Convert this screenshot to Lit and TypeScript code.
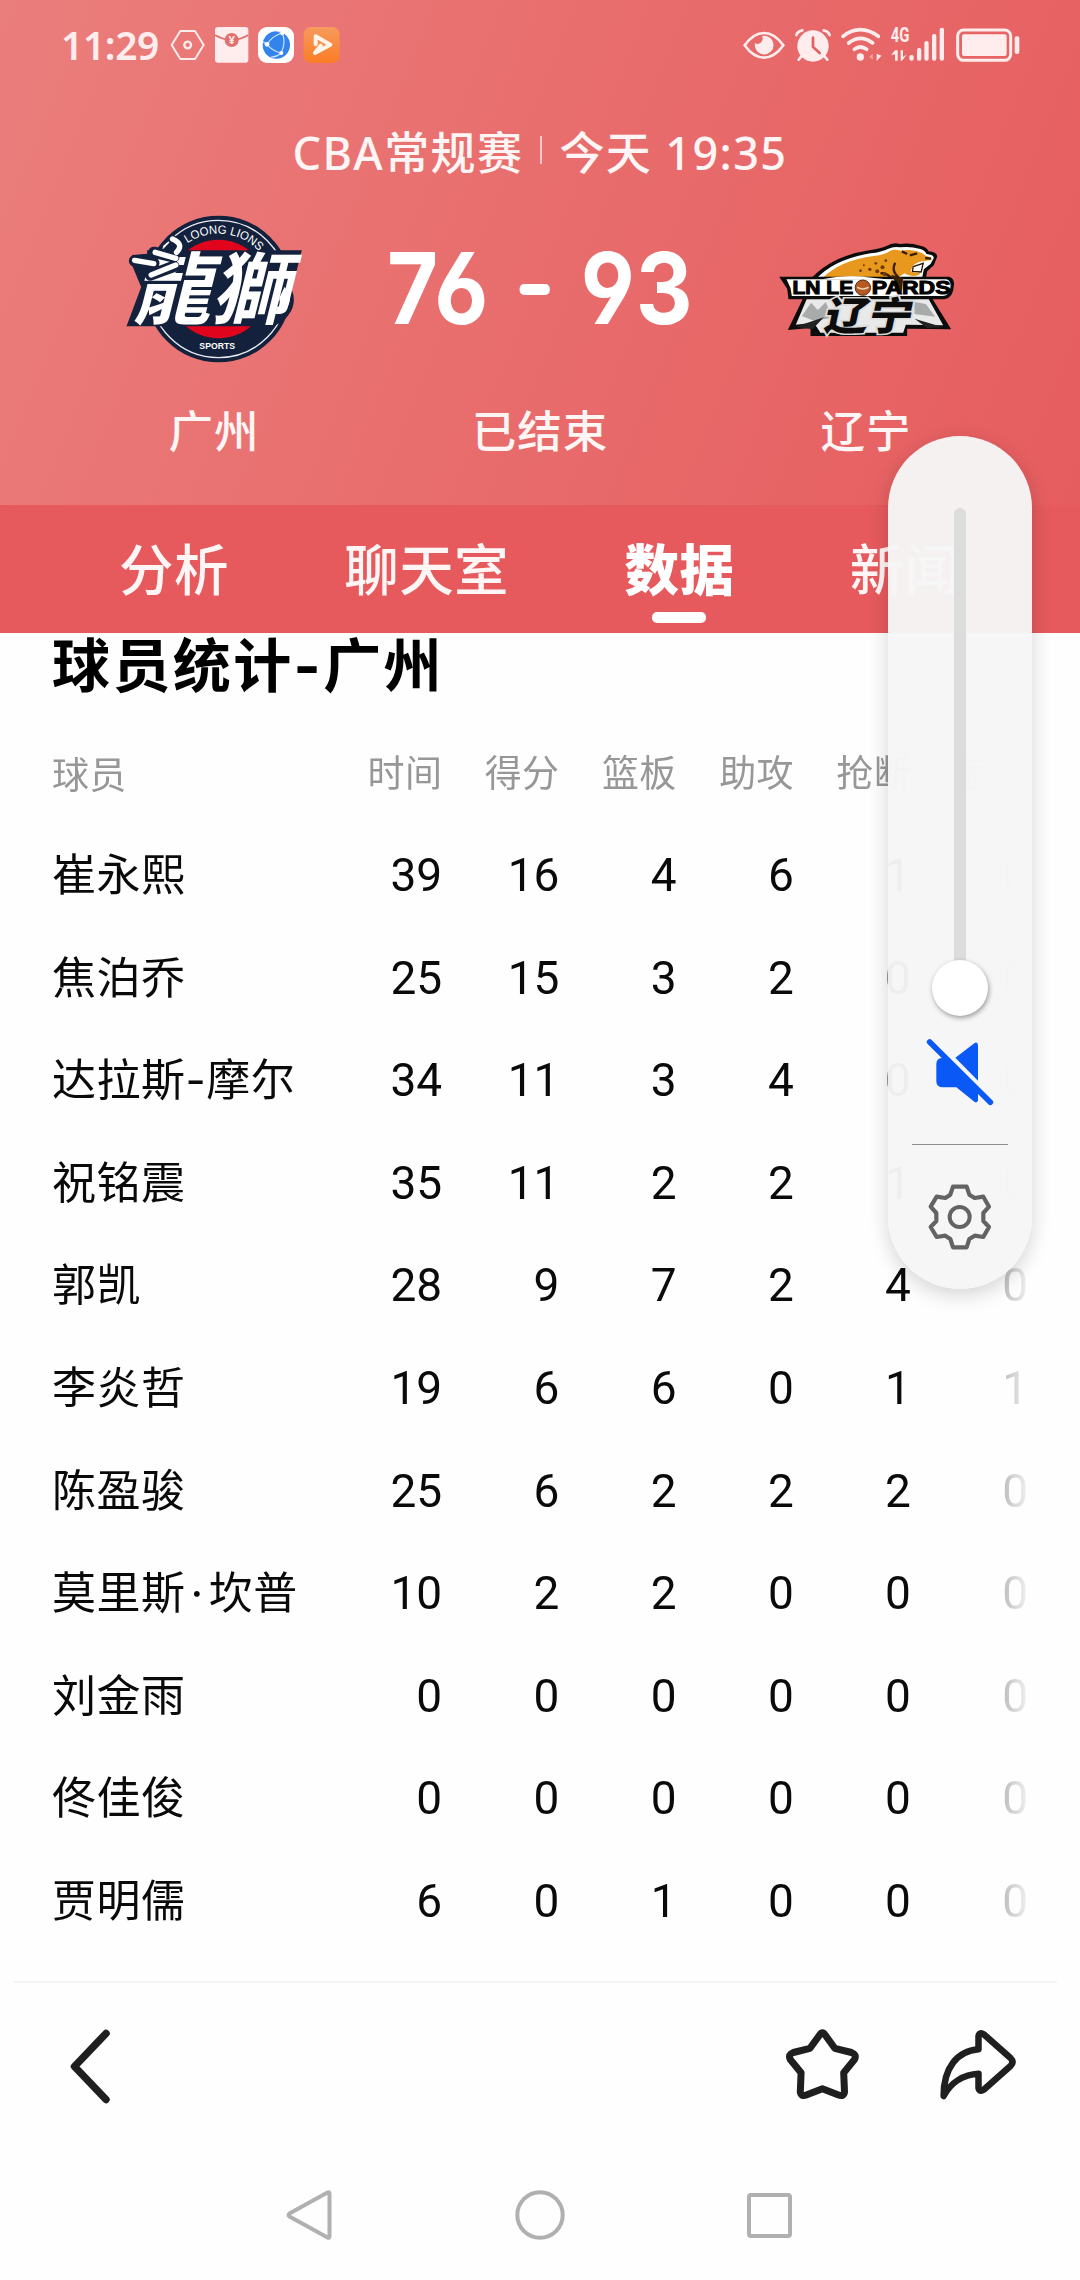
import { LitElement, html, css, svg } from "lit";
import { customElement, property, state } from "lit/decorators.js";
import { classMap } from "lit/directives/class-map.js";

interface PlayerRow {
  name: string;
  stats: number[];
}

const TABS = ["分析", "聊天室", "数据", "新闻"];

const COLUMNS = ["时间", "得分", "篮板", "助攻", "抢断", "盖帽"];

const PLAYERS: PlayerRow[] = [
  { name: "崔永熙", stats: [39, 16, 4, 6, 1, 0] },
  { name: "焦泊乔", stats: [25, 15, 3, 2, 0, 0] },
  { name: "达拉斯-摩尔", stats: [34, 11, 3, 4, 0, 0] },
  { name: "祝铭震", stats: [35, 11, 2, 2, 1, 0] },
  { name: "郭凯", stats: [28, 9, 7, 2, 4, 0] },
  { name: "李炎哲", stats: [19, 6, 6, 0, 1, 1] },
  { name: "陈盈骏", stats: [25, 6, 2, 2, 2, 0] },
  { name: "莫里斯·坎普", stats: [10, 2, 2, 0, 0, 0] },
  { name: "刘金雨", stats: [0, 0, 0, 0, 0, 0] },
  { name: "佟佳俊", stats: [0, 0, 0, 0, 0, 0] },
  { name: "贾明儒", stats: [6, 0, 1, 0, 0, 0] },
];

@customElement("status-bar")
export class StatusBar extends LitElement {
  static styles = css`
    :host {
      display: flex;
      align-items: center;
      justify-content: space-between;
      height: 90px;
      padding: 0 60px 0 61px;
      color: #ffecec;
    }

    .group {
      display: flex;
      align-items: center;
    }

    .time {
      width: 101px;
      font-size: 39px;
      font-weight: 600;
      line-height: 50px;
      letter-spacing: -0.4px;
      white-space: nowrap;
    }

    .left {
      gap: 9px;
    }

    .right {
      gap: 10px;
    }

    svg {
      display: block;
      height: 36px;
      overflow: visible;
    }

    .network {
      font-family: "Roboto", sans-serif;
      font-size: 58px;
      font-weight: 700;
    }

    .yen {
      font-size: 34px;
      font-weight: 700;
    }
  `;

  render() {
    return html`
      <div class="group left">
        <span class="time">11:29</span>
        <svg width="34" viewBox="392 52 102 108" fill="none" stroke="currentColor">
          <path
            d="M420 64h44l26 42-26 42h-44l-26-42z"
            stroke-width="6"
            stroke-linejoin="round"
          />
          <circle cx="442" cy="106" r="10" stroke-width="7" />
        </svg>
        <svg width="34" viewBox="525 52 102 108">
          <rect x="528" y="52" width="100" height="107" rx="9" fill="currentColor" />
          <path
            d="M528 76Q578 106 628 76"
            fill="none"
            stroke="#dd6b69"
            stroke-width="5"
          />
          <circle cx="578" cy="91" r="21" fill="#e0706e" />
          <text class="yen" x="578" y="104" text-anchor="middle" fill="currentColor">¥</text>
        </svg>
        <svg width="36" viewBox="654 52 108 108">
          <rect x="657" y="52" width="108" height="108" rx="27" fill="#fff" />
          <circle cx="712" cy="106" r="41" fill="#3284ec" />
          <g fill="none" stroke="#cfe4ff" stroke-width="3.5">
            <path d="M730 70Q700 78 684 104Q700 124 726 130" />
            <path d="M730 70Q742 100 726 130Q714 142 696 142" />
            <path d="M684 104L672 96M730 70L714 64" />
          </g>
          <g fill="#fff">
            <circle cx="730" cy="71" r="6" />
            <circle cx="684" cy="104" r="7" />
            <circle cx="727" cy="130" r="6" />
          </g>
        </svg>
        <svg width="36" viewBox="788 52 108 108">
          <defs>
            <linearGradient id="orange" x1="0" y1="0" x2="0" y2="1">
              <stop offset="0" stop-color="#f79a5c" />
              <stop offset="1" stop-color="#fb7d25" />
            </linearGradient>
          </defs>
          <rect x="793" y="52" width="108" height="108" rx="22" fill="url(#orange)" />
          <path
            d="M829 104V80L873 105L827 130L844 108"
            fill="none"
            stroke="#fff4ea"
            stroke-width="12"
            stroke-linejoin="round"
            stroke-linecap="round"
          />
        </svg>
      </div>
      <div class="group right">
        <svg width="42" viewBox="67 52 126 108" fill="none" stroke="currentColor">
          <path d="M72 107Q98 70 130 70T188 107Q162 144 130 144T72 107z" stroke-width="8" />
          <path
            d="M124 79A28 28 0 1 1 103 101A16 16 0 0 0 124 79z"
            fill="currentColor"
            stroke="none"
          />
        </svg>
        <svg width="36" viewBox="227 52 108 108">
          <g fill="none" stroke="currentColor" stroke-linecap="round">
            <path d="M231 76Q236 64 249 62M331 76Q326 64 313 62" stroke-width="8" />
            <path d="M248 138L238 150M314 138L324 150" stroke-width="8" />
          </g>
          <circle cx="281" cy="109" r="47" fill="currentColor" />
          <path
            d="M281 84V112L301 130"
            fill="none"
            stroke="#e4605f"
            stroke-width="8"
            stroke-linecap="round"
          />
        </svg>
        <svg width="41" viewBox="363 52 123 108" fill="none" stroke="currentColor">
          <g stroke-width="11" stroke-linecap="round">
            <path d="M369 80Q420 40 475 80" />
            <path d="M386 100Q421 72 458 100" />
            <path d="M403 119Q421 105 440 119" />
          </g>
          <circle cx="421" cy="142" r="11" fill="currentColor" stroke="none" />
          <path d="M458 132L448 141L458 150z" fill="#f3a5a3" stroke="none" />
          <path d="M470 132V154L484 138z" fill="currentColor" stroke="none" />
        </svg>
        <svg width="54" viewBox="513 52 162 108" fill="currentColor">
          <text class="network" x="509" y="98" textLength="56" lengthAdjust="spacingAndGlyphs">4G</text>
          <path d="M511 136L522 122H530V153H522V134zM539 122H546V142L558 134L543 153H539z" />
          <rect x="565" y="136" width="13" height="17" rx="6" />
          <rect x="588" y="115" width="13" height="38" rx="6" />
          <rect x="610" y="94" width="13" height="59" rx="6" />
          <rect x="633" y="73" width="13" height="80" rx="6" />
          <rect x="656" y="54" width="13" height="99" rx="6" />
        </svg>
        <svg width="64" viewBox="707 52 192 108">
          <rect
            x="712"
            y="61"
            width="159"
            height="91"
            rx="18"
            fill="none"
            stroke="currentColor"
            stroke-width="9"
          />
          <rect x="725" y="74" width="134" height="65" rx="6" fill="currentColor" />
          <rect x="883" y="80" width="14" height="53" rx="6" fill="currentColor" />
        </svg>
      </div>
    `;
  }
}

@customElement("team-logo")
export class TeamLogo extends LitElement {
  static styles = css`
    :host {
      display: block;
    }

    svg {
      display: block;
      overflow: visible;
    }

    .ring {
      font-family: "Liberation Sans", sans-serif;
      font-size: 36px;
      fill: #fff;
    }

    .small {
      font-size: 26px;
    }

    .lion {
      font-family: "Noto Sans CJK TC", sans-serif;
      font-weight: 700;
      font-size: 236px;
    }

    .latin {
      font-family: "Liberation Sans", sans-serif;
      font-weight: 700;
      font-size: 54px;
      stroke: #000;
      stroke-width: 3;
    }

    .liao {
      font-family: "Noto Sans CJK SC", sans-serif;
      font-weight: 900;
      font-size: 116px;
      paint-order: stroke;
    }
  `;

  @property() team = "";

  private lions() {
    return svg`
      <svg width="179" height="152" viewBox="44 40 536 456">
        <circle cx="324" cy="268" r="220" fill="#14213d" />
        <circle cx="324" cy="268" r="206" fill="none" stroke="#e8ecf4" stroke-width="4" />
        <circle cx="324" cy="268" r="148" fill="#e0041c" />
        <path
          d="M110 152H574L544 270Q560 310 534 346Q516 372 484 380H48L92 262L66 200Q50 180 66 166L110 162z"
          fill="#14213d"
        />
        <g transform="translate(66 354) skewX(-14)">
          <text
            class="lion"
            textLength="470"
            lengthAdjust="spacingAndGlyphs"
            fill="#fff"
          >龍獅</text>
        </g>
        <g fill="none" stroke-linecap="round" stroke-linejoin="round">
          <path d="M72 184L130 190M130 158L190 172M184 122Q212 138 190 160M120 226L190 200" stroke="#14213d" stroke-width="34" />
          <path d="M72 182L130 192M134 158L196 176M186 118Q222 134 198 158M122 226L196 196" stroke="#fff" stroke-width="16" />
          <path d="M160 140L174 128" stroke="#fff" stroke-width="5" />
        </g>
        <path d="M522 262Q550 296 528 326Q508 350 488 340Q514 320 506 296z" fill="#fff" />
        <path id="top" d="M158 268A166 166 0 0 1 490 268" fill="none" />
        <text class="ring">
          <textPath
            href="#top"
            startOffset="53.5%"
            text-anchor="middle"
            textLength="236"
            lengthAdjust="spacingAndGlyphs"
          >LOONG LIONS</textPath>
        </text>
        <text class="ring small" x="320" y="448" text-anchor="middle" font-weight="700">SPORTS</text>
      </svg>
    `;
  }

  private leopards() {
    return svg`
      <svg width="179" height="100" viewBox="50 55 536 300">
        <path
          d="M130 228L82 328L150 322V346H440V324L572 326L512 228z"
          fill="#0c0c0c"
        />
        <path d="M140 232L106 312L160 306L180 336H428L436 312L548 314L504 234z" fill="#e9e9e9" />
        <path d="M124 286L152 246L172 268L196 244L214 292L160 300z" fill="#a9abab" />
        <path d="M462 244L496 250L524 288L462 280z" fill="#a9abab" />
        <path d="M106 318L190 290L156 326zM548 320L462 294L500 322z" fill="#222" />
        <path
          d="M148 178Q210 106 330 88Q360 84 378 76Q398 64 418 70Q450 66 482 76Q500 80 504 92Q530 94 530 108L520 134L500 152L496 174L430 200H160z"
          fill="#0c0c0c"
        />
        <path
          d="M166 176Q220 116 330 98Q364 94 384 84Q400 76 418 80Q450 76 476 84Q494 88 498 100Q520 102 520 112L510 130L490 146L484 176L430 196H176z"
          fill="#fff"
        />
        <path
          d="M184 174Q240 118 340 106Q374 102 390 90Q404 84 420 90Q450 84 476 94Q490 98 496 106Q514 108 512 118L490 122Q478 120 458 134L450 152Q468 160 480 154L476 162Q452 172 432 158L416 168L420 200L404 180Q300 158 184 174z"
          fill="#e8981c"
        />
        <path
          d="M404 126Q392 150 412 168L424 206L398 178Q380 156 360 158M424 92L440 100M448 104L470 98M494 112L512 114"
          fill="none"
          stroke="#3a2003"
          stroke-width="7"
        />
        <g fill="#6d3c04">
          <circle cx="346" cy="128" r="4" />
          <circle cx="366" cy="140" r="6" />
          <circle cx="328" cy="146" r="5" />
          <circle cx="350" cy="152" r="6" />
          <circle cx="300" cy="150" r="4" />
          <circle cx="376" cy="120" r="4" />
          <circle cx="310" cy="134" r="3" />
          <circle cx="372" cy="160" r="6" />
        </g>
        <path d="M458 138L488 128L482 154L456 152z" fill="#fff" stroke="#2b1500" stroke-width="4" />
        <path d="M56 168H566Q584 174 580 196Q578 232 552 236H84L80 204z" fill="#0c0c0c" />
        <path d="M78 176H558Q572 180 570 198Q568 224 548 226H94L90 202z" fill="#fff" />
        <path d="M184 176Q260 160 340 172L400 178z" fill="#fff" />
        <path d="M392 162L424 216L428 172z" fill="#3a2003" />
        <text class="latin" x="96" y="220" textLength="182" lengthAdjust="spacingAndGlyphs">LN LE</text>
        <circle cx="307" cy="201" r="23" fill="#b65a24" stroke="#5d2a0c" stroke-width="3" />
        <path d="M290 200Q307 210 324 200" fill="none" stroke="#f0d3b4" stroke-width="5" />
        <text class="latin" x="334" y="220" textLength="236" lengthAdjust="spacingAndGlyphs">PARDS</text>
        <g transform="translate(186 328) skewX(-12)">
          <text
            class="liao"
            textLength="264"
            lengthAdjust="spacingAndGlyphs"
            fill="#0c0c0c"
            stroke="#dcdcdc"
            stroke-width="10"
          >辽宁</text>
        </g>
      </svg>
    `;
  }

  render() {
    return html`${this.team === "lions" ? this.lions() : this.leopards()}`;
  }
}

@customElement("volume-panel")
export class VolumePanel extends LitElement {
  static styles = css`
    :host {
      display: flex;
      flex-direction: column;
      align-items: center;
      box-sizing: border-box;
      width: 144px;
      height: 853px;
      padding-top: 72px;
      border-radius: 72px;
      background: rgba(246, 246, 246, 0.967);
      box-shadow: 0 6px 20px rgba(0, 0, 0, 0.17);
    }

    .slider {
      display: flex;
      flex-direction: column;
      align-items: center;
      height: 508px;
    }

    .track {
      flex: 1;
      width: 12px;
      margin: 0 1px -4px 0;
      border-radius: 6px 6px 0 0;
      background: #dcdcdc;
    }

    .thumb {
      width: 56px;
      height: 56px;
      border-radius: 50%;
      background: #fff;
      box-shadow: 1px 2px 5px rgba(0, 0, 0, 0.38);
    }

    .mute {
      margin-top: 20px;
    }

    .divider {
      width: 96px;
      height: 1px;
      margin-top: 36px;
      background: #8e8e8e;
    }

    .gear {
      margin-top: 36px;
    }

    svg {
      display: block;
    }
  `;

  render() {
    return html`
      <div class="slider">
        <div class="track"></div>
        <div class="thumb"></div>
      </div>
      <svg class="mute" width="72" height="72" viewBox="192 409 216 216">
        <path
          d="M229 492Q230 476 246 475H262L354 568V602Q352 611 344 607L289 563H248Q230 562 229 546z"
          fill="#0a59f7"
        />
        <path d="M286 474L344 430Q352 426 354 436V543z" fill="#0a59f7" />
        <path
          d="M209 427L391 608"
          stroke="#0a59f7"
          stroke-width="17"
          stroke-linecap="round"
        />
      </svg>
      <div class="divider"></div>
      <svg class="gear" width="72" height="72" viewBox="192 843 216 216" fill="none" stroke="#636363">
        <path
          d="M279 860H320L328 884L344 894L370 890L387 920L370 939V963L387 981L370 1011L344 1007L328 1017L320 1042H279L271 1017L256 1007L230 1011L212 981L229 963V939L212 920L230 890L256 894L271 884z"
          stroke-width="12.5"
          stroke-linejoin="round"
        />
        <circle cx="299" cy="951" r="30" stroke-width="12" />
      </svg>
    `;
  }
}

@customElement("stats-table")
export class StatsTable extends LitElement {
  static styles = css`
    :host {
      display: block;
      padding: 0 0 0 52px;
    }

    .title {
      margin: 0;
      padding-top: 1px;
      font-family: "Inter", "Noto Sans CJK SC", sans-serif;
      font-size: 58px;
      font-weight: 700;
      line-height: 64px;
      letter-spacing: 2.4px;
      color: #000;
    }

    .table {
      margin-top: 23px;
      /* last column fades out towards the scroll edge */
      -webkit-mask-image: linear-gradient(
        to right,
        #000 864px,
        transparent 982px
      );
      mask-image: linear-gradient(to right, #000 864px, transparent 982px);
    }

    .row {
      display: grid;
      grid-template-columns: 273px repeat(6, 117.2px);
      align-items: center;
      height: 102.55px;
      font-size: 44px;
      line-height: 60px;
      color: #0a0a0a;
    }

    .name {
      white-space: nowrap;
      font-family: "Inter", "Noto Sans CJK SC", sans-serif;
      letter-spacing: 0.5px;
    }

    .dot {
      margin: 0 5px;
    }

    .value {
      text-align: right;
      font-family: "Roboto", "Noto Sans CJK SC", sans-serif;
      font-size: 46px;
    }

    .head {
      padding-top: 4px;
      height: 99px;
    }

    .head,
    .head .value {
      font-size: 37px;
      letter-spacing: 0.3px;
      color: #979797;
    }
  `;

  @property() heading = "";
  @property({ type: Array }) columns: string[] = [];
  @property({ type: Array }) players: PlayerRow[] = [];

  // foreign names are written "given·family"
  private renderName(name: string) {
    const [first, last] = name.split("·");
    return last
      ? html`${first}<span class="dot">·</span>${last}`
      : html`${first}`;
  }

  render() {
    return html`
      <h2 class="title">${this.heading}</h2>
      <div class="table">
        <div class="row head">
          <span>球员</span>
          ${this.columns.map((c) => html`<span class="value">${c}</span>`)}
        </div>
        ${this.players.map(
          (player) => html`
            <div class="row">
              <span class="name">${this.renderName(player.name)}</span>
              ${player.stats.map(
                (value) => html`<span class="value">${value}</span>`
              )}
            </div>
          `
        )}
      </div>
    `;
  }
}

@customElement("app-root")
export class AppRoot extends LitElement {
  static styles = css`
    :host {
      position: relative;
      display: flex;
      flex-direction: column;
      width: 1080px;
      height: 2280px;
      overflow: hidden;
      background: #fefefe;
      font-family: "Noto Sans", "Noto Sans CJK SC", sans-serif;
    }

    .hero {
      height: 505px;
      color: #fff5f4;
      background: linear-gradient(112deg, #ea7e7c 0%, #e86a6a 58%, #e65d5f 100%);
    }

    .match {
      display: flex;
      align-items: center;
      justify-content: center;
      height: 120px;
      padding-bottom: 4px;
      font-size: 45px;
      font-weight: 500;
      letter-spacing: 1.4px;
    }

    .match .bar {
      width: 2px;
      height: 28px;
      margin: 0 17px;
      background: rgba(255, 255, 255, 0.6);
    }

    .board {
      display: grid;
      grid-template-columns: repeat(3, 326px);
      grid-template-rows: 150px 128px;
      justify-content: center;
      place-items: center;
    }

    .score {
      display: flex;
      align-items: center;
      justify-content: center;
      gap: 25px;
      padding-bottom: 3px;
      font-family: "Inter", "Noto Sans", sans-serif;
      font-feature-settings: "cv03", "cv04";
      font-size: 99px;
      font-weight: 700;
      line-height: 140px;
      letter-spacing: 1px;
      color: #fff;
      transform: scaleX(0.89);
    }

    .dash {
      width: 34px;
      height: 11px;
      margin: 4px 10px 0 9px;
      border-radius: 5px;
      background: #fff;
    }

    .label {
      font-size: 44.5px;
      font-weight: 500;
      letter-spacing: 1px;
    }

    .tabs {
      display: flex;
      align-items: center;
      gap: 115.5px;
      height: 128px;
      padding-left: 119px;
      background: #e65a5d;
      color: #fff5f4;
      font-size: 54.5px;
      font-weight: 500;
      letter-spacing: 0.4px;
    }

    .tab {
      position: relative;
      line-height: 80px;
      white-space: nowrap;
    }

    .tab.active {
      font-weight: 900;
      color: #fff;
    }

    .tab.active::after {
      content: "";
      position: absolute;
      left: 50%;
      bottom: -14px;
      width: 54px;
      height: 11px;
      margin-left: -27px;
      border-radius: 5px;
      background: #fff;
    }

    .content {
      flex: 1;
    }

    .toolbar {
      display: flex;
      align-items: center;
      height: 166px;
      margin: 0 23px 0 14px;
      border-top: 2px solid #f4f4f4;
    }

    .toolbar .back {
      margin-left: 36px;
      margin-right: auto;
    }

    .toolbar .star {
      margin-right: 65px;
    }

    .toolbar .share {
      margin-right: 37px;
    }

    .nav {
      display: flex;
      align-items: center;
      justify-content: center;
      gap: 178px;
      height: 131px;
    }

    svg {
      display: block;
    }

    volume-panel {
      position: absolute;
      top: 436px;
      left: 888px;
    }
  `;

  @state() private activeTab = 2;

  private selectTab(index: number) {
    this.activeTab = index;
  }

  render() {
    return html`
      <header class="hero">
        <status-bar></status-bar>
        <div class="match">
          <span>CBA常规赛</span>
          <span class="bar"></span>
          <span>今天 19:35</span>
        </div>
        <div class="board">
          <team-logo team="lions"></team-logo>
          <div class="score">
            <span>76</span>
            <span class="dash"></span>
            <span>93</span>
          </div>
          <team-logo team="leopards"></team-logo>
          <span class="label">广州</span>
          <span class="label">已结束</span>
          <span class="label">辽宁</span>
        </div>
      </header>
      <nav class="tabs">
        ${TABS.map(
          (tab, index) => html`
            <span
              class=${classMap({ tab: true, active: index === this.activeTab })}
              @click=${() => this.selectTab(index)}
              >${tab}</span
            >
          `
        )}
      </nav>
      <main class="content">
        <stats-table
          heading="球员统计-广州"
          .columns=${COLUMNS}
          .players=${PLAYERS}
        ></stats-table>
      </main>
      <footer class="toolbar">
        <svg class="back" width="80" height="90" viewBox="50 2020 80 90" fill="none">
          <path
            d="M106 2032.5L74.5 2065.5L106 2098.5"
            stroke="#1f1f1f"
            stroke-width="7.5"
            stroke-linecap="round"
            stroke-linejoin="round"
          />
        </svg>
        <svg class="star" width="85" height="90" viewBox="0 0 85 90" fill="none">
          <path
            d="M39.6 14Q42.4 9.5 45.2 14L54.8 27.3L71.5 31.5Q77 33.5 74.5 38.5L63.7 51.7L64.5 71Q63.5 76 58.5 74L42.4 67.7L26.3 74Q21.3 76 20.3 71L21.1 51.7L10.3 38.5Q7.8 33.5 13.3 31.5L30 27.3z"
            stroke="#1f1f1f"
            stroke-width="7"
            stroke-linejoin="round"
          />
        </svg>
        <svg class="share" width="90" height="90" viewBox="0 0 90 90" fill="none">
          <path
            d="M13.6 75C13.6 47 27 30 48.5 28.3V15Q49.5 10.5 54 13.5L80.5 37Q84.5 41 80.5 45L54 68.5Q49.5 71.5 48.5 67V52.7C34 53.5 21 61 13.6 75z"
            stroke="#1f1f1f"
            stroke-width="6.5"
            stroke-linejoin="round"
          />
        </svg>
      </footer>
      <div class="nav">
        <svg width="50" height="52" viewBox="2 0 50 52" fill="none">
          <path
            d="M44.5 3.5Q46.5 2.5 46.5 5V47Q46.5 49.5 44.5 48.5L6.5 27.5Q4.5 26 6.5 24.5z"
            stroke="#b0b0b0"
            stroke-width="4"
          />
        </svg>
        <svg width="52" height="52" viewBox="-1 0 52 52" fill="none">
          <circle cx="26" cy="26" r="22.7" stroke="#b0b0b0" stroke-width="4" />
        </svg>
        <svg width="52" height="52" viewBox="0 0 52 52" fill="none">
          <rect x="6" y="6" width="41" height="41" rx="2" stroke="#b0b0b0" stroke-width="4" />
        </svg>
      </div>
      <volume-panel></volume-panel>
    `;
  }
}
